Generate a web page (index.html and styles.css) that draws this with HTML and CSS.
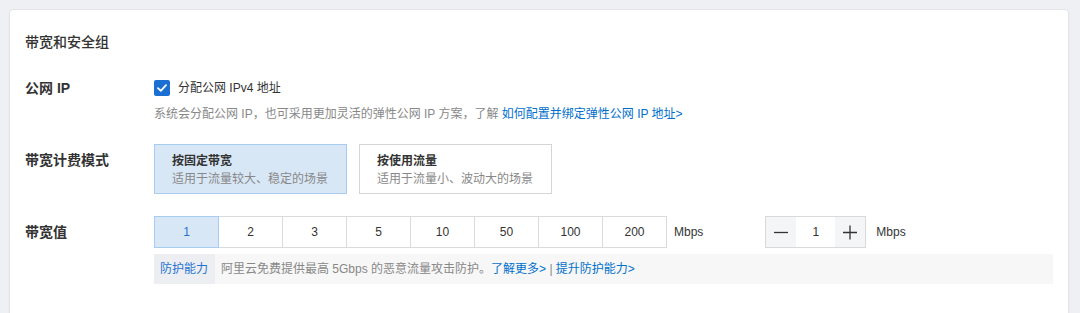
FILE: index.html
```html
<!doctype html>
<html>
	<head>
		<meta http-equiv="Content-Type" content="text/html; charset=utf-8">
		<title>带宽和安全组</title>
		<link rel="stylesheet" href="styles.css">
	</head>
<body>

	<!--panel start-->
	<div class="page">
		<div class="panel">
			<h2 class="p_title">带宽和安全组</h2>

			<div class="p_row">
				<div class="p_label">公网 IP</div>
				<div class="p_body">
					<label class="chk">
						<span class="chk_box">
							<svg width="10" height="8" viewBox="0 0 10 8"><path d="M1 4.2 L3.8 6.8 L9 1.2" fill="none" stroke="#fff" stroke-width="1.8" stroke-linecap="round" stroke-linejoin="round"/></svg>
						</span>
						分配公网 IPv4 地址
					</label>
					<p class="help">系统会分配公网 IP，也可采用更加灵活的弹性公网 IP 方案，了解 <a href="#">如何配置并绑定弹性公网 IP 地址&gt;</a></p>
				</div>
			</div>

			<div class="p_row">
				<div class="p_label">带宽计费模式</div>
				<div class="p_body">
					<div class="modes">
						<div class="mode on">
							<b>按固定带宽</b>
							<span>适用于流量较大、稳定的场景</span>
						</div>
						<div class="mode">
							<b>按使用流量</b>
							<span>适用于流量小、波动大的场景</span>
						</div>
					</div>
				</div>
			</div>

			<div class="p_row">
				<div class="p_label">带宽值</div>
				<div class="p_body">
					<div class="bw">
						<ul class="bw_list">
							<li class="on">1</li>
							<li>2</li>
							<li>3</li>
							<li>5</li>
							<li>10</li>
							<li>50</li>
							<li>100</li>
							<li>200</li>
						</ul>
						<span class="unit">Mbps</span>
						<div class="step">
							<span class="step_btn">
								<svg width="16" height="16" viewBox="0 0 16 16"><path d="M1 8.5 H15" stroke="#333" stroke-width="1.3"/></svg>
							</span>
							<span class="step_val">1</span>
							<span class="step_btn">
								<svg width="16" height="16" viewBox="0 0 16 16"><path d="M1 8.5 H15 M8 1.5 V15.5" stroke="#333" stroke-width="1.3"/></svg>
							</span>
						</div>
						<span class="unit unit_r">Mbps</span>
					</div>
					<div class="guard">
						<span class="g_tag">防护能力</span>
						<span class="g_text">阿里云免费提供最高 5Gbps 的恶意流量攻击防护。<a href="#">了解更多&gt;</a> | <a href="#">提升防护能力&gt;</a></span>
					</div>
				</div>
			</div>
		</div>
	</div>
	<!--end panel-->

</body>
</html>
```

FILE: styles.css
```css
*{margin:0;padding:0;box-sizing:border-box;}
body{background:#eff0f3;font-size:12px;font-family:"Liberation Sans","Noto Sans CJK SC",sans-serif;color:#333;}
a{color:#0070cc;text-decoration:none;}

/*panel start*/
.page{padding:9px 11px 0 9px;}
.panel{background:#fff;border:1px solid #e2e4e8;border-radius:4px;min-height:330px;padding:22px 15px 0 15px;box-shadow:0 1px 2px rgba(0,0,0,0.04);}
.p_title{font-size:14px;font-weight:500;line-height:20px;color:#333;margin-bottom:20px;}
.p_row{display:flex;margin-bottom:22px;}
.p_label{width:129px;flex:none;font-size:14px;font-weight:600;line-height:32px;color:#333;}
.p_body{flex:1;}

.chk{display:flex;align-items:center;height:32px;line-height:32px;color:#333;}
.chk_box{width:16px;height:16px;border-radius:2px;background:#1c6fd2;display:flex;align-items:center;justify-content:center;margin-right:8px;}
.help{line-height:16px;margin-top:2px;color:#888;}

.modes{display:flex;gap:12px;}
.mode{width:193px;height:50px;border:1px solid #d5d5d5;padding:7px 0 0 17px;line-height:18px;}
.mode b{display:block;font-weight:600;color:#333;}
.mode span{display:block;color:#888;}
.mode.on{background:#d8e7f6;border-color:#a9cbee;}

.bw{display:flex;align-items:center;height:32px;}
.bw_list{display:flex;list-style:none;}
.bw_list li{width:65px;height:32px;line-height:30px;text-align:center;border:1px solid #dadada;margin-left:-1px;color:#333;cursor:pointer;}
.bw_list li:first-child{margin-left:0;}
.bw_list li.on{background:#d8e7f6;border-color:#a9cbee;color:#1f74d3;position:relative;}
.unit{margin-left:7px;color:#333;}
.unit_r{margin-left:10px;}
.step{display:flex;height:32px;border:1px solid #d9d9d9;margin-left:62px;}
.step_btn{width:30px;background:#f4f5f7;display:flex;align-items:center;justify-content:center;}
.step_val{width:39px;line-height:30px;text-align:center;}

.guard{display:flex;height:30px;line-height:30px;margin-top:6px;background:#f7f7f7;}
.g_tag{background:#eceef1;color:#1f74d3;padding:0 7px 0 6px;}
.g_text{padding-left:6px;color:#888;}
.g_text a{color:#0070cc;}
/*end panel*/
```
